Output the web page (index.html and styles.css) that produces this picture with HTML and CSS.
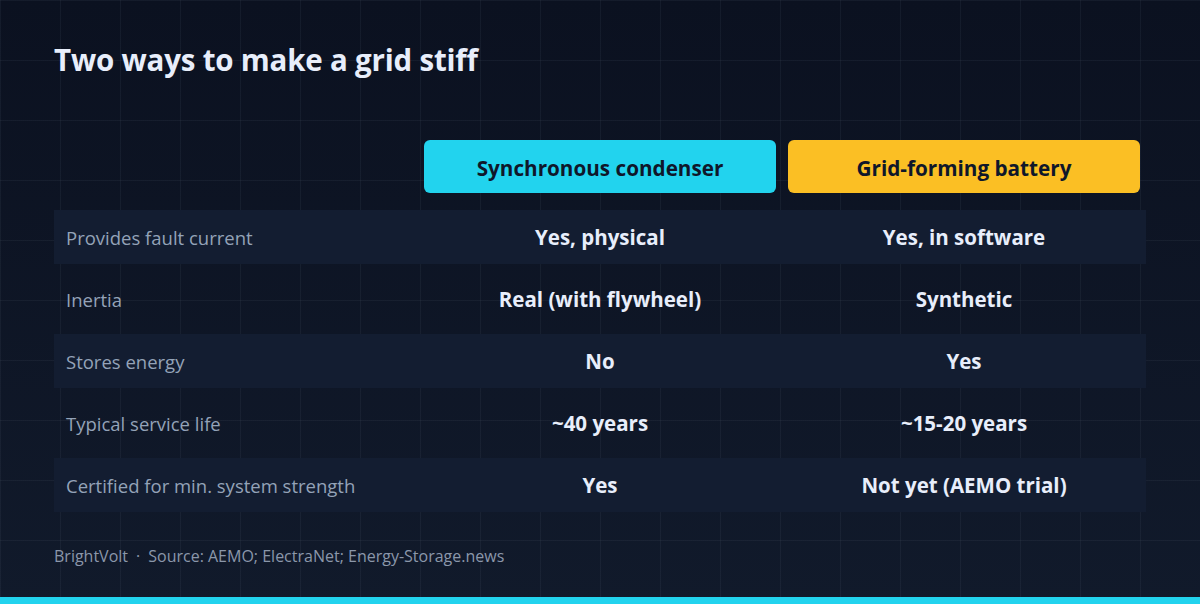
FILE: index.html
```html
<!DOCTYPE html>
<html lang="en">
<head>
<meta charset="utf-8">
<title>Two ways to make a grid stiff</title>
<link rel="stylesheet" href="styles.css">
</head>
<body>
<main class="page">
  <h1 class="title">Two ways to make a grid stiff</h1>
  <div class="head-row">
    <div class="head-spacer"></div>
    <div class="pill pill-cyan">Synchronous condenser</div>
    <div class="pill pill-amber">Grid-forming battery</div>
  </div>
  <div class="table">
    <div class="row shade"><div class="label">Provides fault current</div><div class="val">Yes, physical</div><div class="val">Yes, in software</div></div>
    <div class="row"><div class="label">Inertia</div><div class="val">Real (with flywheel)</div><div class="val">Synthetic</div></div>
    <div class="row shade"><div class="label">Stores energy</div><div class="val">No</div><div class="val">Yes</div></div>
    <div class="row"><div class="label">Typical service life</div><div class="val">~40 years</div><div class="val">~15-20 years</div></div>
    <div class="row shade"><div class="label">Certified for min. system strength</div><div class="val">Yes</div><div class="val">Not yet (AEMO trial)</div></div>
  </div>
  <p class="footer">BrightVolt<span class="dot">·</span>Source: AEMO; ElectraNet; Energy-Storage.news</p>
</main>
<div class="bar"></div>
</body>
</html>
```
FILE: styles.css
```css
html, body {
  margin: 0;
  padding: 0;
}
body {
  width: 1200px;
  height: 604px;
  overflow: hidden;
  display: flex;
  flex-direction: column;
  font-family: "Open Sans", "Noto Sans", sans-serif;
  background-color: #0d1322;
  background-image:
    linear-gradient(to right, rgba(148, 163, 184, 0.07) 1px, transparent 1px),
    linear-gradient(to bottom, rgba(148, 163, 184, 0.07) 1px, transparent 1px),
    linear-gradient(to bottom, #0b1120, #111a2b);
  background-size: 60px 60px, 60px 60px, 100% 100%;
  background-position: 0 0, 0 0, 0 0;
}
.page {
  padding: 40px 54px 0;
  display: flex;
  flex-direction: column;
}
.title {
  margin: 0;
  font-size: 29.5px;
  line-height: 40px;
  font-weight: 700;
  color: #e8eefb;
  letter-spacing: -0.2px;
}
.head-row,
.row {
  display: grid;
  grid-template-columns: 1fr 352px 352px;
  column-gap: 12px;
  padding: 0 6px 0 12px;
}
.head-row {
  margin-top: 60px;
}
.pill {
  height: 53px;
  border-radius: 6px;
  display: flex;
  align-items: center;
  justify-content: center;
  padding-top: 2px;
  box-sizing: border-box;
  font-size: 20.7px;
  font-weight: 700;
  color: #0f172a;
}
.pill-cyan { background: #22d3ee; }
.pill-amber { background: #fbbf24; }
.table {
  margin-top: 17px;
  display: flex;
  flex-direction: column;
  gap: 8px;
}
.row {
  height: 54px;
  align-items: center;
}
.row.shade {
  background: #131d31;
}
.label {
  font-size: 18.5px;
  color: #94a3b8;
}
.val {
  text-align: center;
  font-size: 20.5px;
  font-weight: 700;
  color: #e8eefb;
}
.footer {
  margin: 34px 0 0;
  font-size: 16px;
  line-height: 20px;
  color: #8b97aa;
}
.dot {
  margin: 0 8px;
}
.bar {
  margin-top: auto;
  height: 7px;
  background: #22d3ee;
}
```
